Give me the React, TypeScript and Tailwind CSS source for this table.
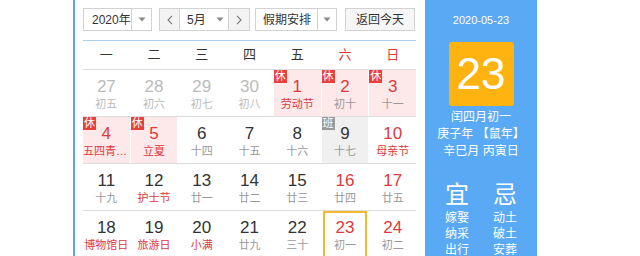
import React from 'react';

type Day = {
  n: number;
  l: string;
  red?: boolean;
  fest?: boolean;
  other?: boolean;
  rest?: boolean;
  work?: boolean;
  today?: boolean;
};

const weeks: Day[][] = [
  [
    { n: 27, l: '初五', other: true },
    { n: 28, l: '初六', other: true },
    { n: 29, l: '初七', other: true },
    { n: 30, l: '初八', other: true },
    { n: 1, l: '劳动节', red: true, fest: true, rest: true },
    { n: 2, l: '初十', red: true, rest: true },
    { n: 3, l: '十一', red: true, rest: true },
  ],
  [
    { n: 4, l: '五四青年节', red: true, fest: true, rest: true },
    { n: 5, l: '立夏', red: true, fest: true, rest: true },
    { n: 6, l: '十四' },
    { n: 7, l: '十五' },
    { n: 8, l: '十六' },
    { n: 9, l: '十七', work: true },
    { n: 10, l: '母亲节', red: true, fest: true },
  ],
  [
    { n: 11, l: '十九' },
    { n: 12, l: '护士节', fest: true },
    { n: 13, l: '廿一' },
    { n: 14, l: '廿二' },
    { n: 15, l: '廿三' },
    { n: 16, l: '廿四', red: true },
    { n: 17, l: '廿五', red: true },
  ],
  [
    { n: 18, l: '博物馆日', fest: true },
    { n: 19, l: '旅游日', fest: true },
    { n: 20, l: '小满', fest: true },
    { n: 21, l: '廿九' },
    { n: 22, l: '三十' },
    { n: 23, l: '初一', red: true, today: true },
    { n: 24, l: '初二', red: true },
  ],
];

function Caret() {
  return (
    <svg width="8" height="5" viewBox="0 0 8 5">
      <path d="M0.5 0.5 L7.5 0.5 L4 4.5 Z" fill="#8a8a8a" />
    </svg>
  );
}

function Chevron({ dir }: { dir: 'l' | 'r' }) {
  return (
    <svg width="6" height="10" viewBox="0 0 6 10">
      <path
        d={dir === 'l' ? 'M5 0.8 L1 5 L5 9.2' : 'M1 0.8 L5 5 L1 9.2'}
        fill="none"
        stroke="#777"
        strokeWidth="1.1"
      />
    </svg>
  );
}

function Cell({ d }: { d: Day }) {
  const bg = d.rest ? 'bg-[#fde9e9]' : d.work ? 'bg-[#f0f0f0]' : '';
  const numColor = d.other ? 'text-[#bbbbbb]' : d.red ? 'text-[#e0383c]' : 'text-[#333333]';
  const lunColor = d.other ? 'text-[#bbbbbb]' : d.fest ? 'text-[#e0383c]' : 'text-[#999999]';
  return (
    <div className={`relative h-[46px] flex flex-col items-center ${bg}`}>
      {d.rest && (
        <div className="absolute top-0 left-0 w-[13px] h-[13px] bg-[#e8413b] text-white text-[11px] leading-[13px] text-center">
          休
        </div>
      )}
      {d.work && (
        <div className="absolute top-0 left-0 w-[13px] h-[13px] bg-[#9a9a9a] text-white text-[11px] leading-[13px] text-center">
          班
        </div>
      )}
      {d.today && <div className="absolute inset-x-px top-0 h-[50px] border-2 border-[#f5b82e]" />}
      <div className={`pt-[7px] text-[17px] leading-[20px] ${numColor}`}>{d.n}</div>
      <div className={`w-full text-center truncate text-[11px] leading-[14px] ${lunColor}`}>{d.l}</div>
    </div>
  );
}

export default function App() {
  return (
    <div
      className="w-[640px] h-[256px] overflow-hidden bg-white flex"
      style={{ fontFamily: '"Liberation Sans", "Noto Sans CJK SC", sans-serif' }}
    >
      <div className="w-[73px] shrink-0" />
      <div className="flex border-l-2 border-[#5ba4ea] pl-2 h-full">
        <div className="w-[333px] shrink-0">
          {/* controls */}
          <div className="flex items-center h-[23px] mt-2 text-[12px] text-[#333]">
            <div className="flex h-full w-[69px] border border-[#d2d2d2] bg-white">
              <div className="flex-1 flex items-center pl-[8px]">2020年</div>
              <div className="w-[20px] border-l border-[#d2d2d2] flex items-center justify-center">
                <Caret />
              </div>
            </div>
            <div className="flex h-full w-[91px] ml-[7px] border border-[#d2d2d2]">
              <div className="w-[20px] bg-[#f3f3f3] border-r border-[#d2d2d2] flex items-center justify-center">
                <Chevron dir="l" />
              </div>
              <div className="flex-1 flex items-center pl-[7px]">5月</div>
              <div className="w-[16px] flex items-center justify-center">
                <Caret />
              </div>
              <div className="w-[21px] bg-[#f3f3f3] border-l border-[#d2d2d2] flex items-center justify-center">
                <Chevron dir="r" />
              </div>
            </div>
            <div className="flex h-full w-[82px] ml-[5px] border border-[#d2d2d2]">
              <div className="flex-1 flex items-center pl-[7px]">假期安排</div>
              <div className="w-[19px] border-l border-[#d2d2d2] flex items-center justify-center">
                <Caret />
              </div>
            </div>
            <div className="h-full w-[70px] ml-[8px] border border-[#d2d2d2] bg-[#f6f6f6] flex items-center justify-center">
              返回今天
            </div>
          </div>
          <div className="mt-[9px] h-px bg-[#a9d0f2]" />
          {/* weekdays */}
          <div className="grid grid-cols-7 gap-x-px h-[29px] border-b border-[#dddddd] text-[13px]">
            {['一', '二', '三', '四', '五', '六', '日'].map((w, i) => (
              <div
                key={w}
                className={`flex items-center justify-center ${i >= 5 ? 'text-[#e0383c]' : 'text-[#333]'}`}
              >
                {w}
              </div>
            ))}
          </div>
          {weeks.map((wk, i) => (
            <div key={i} className="grid grid-cols-7 gap-x-px border-b border-[#dddddd]">
              {wk.map((d) => (
                <Cell key={`${i}-${d.n}`} d={d} />
              ))}
            </div>
          ))}
        </div>
        {/* right panel */}
        <div className="w-[112px] ml-[9px] h-full bg-[#59a9f5] text-white flex flex-col items-center">
          <div className="mt-[13px] text-[11px] leading-[14px]">2020-05-23</div>
          <div className="mt-[15px] w-[65px] h-[64px] rounded-[3px] bg-[#ffb310] text-[44px] leading-[64px] text-center">
            23
          </div>
          <div className="mt-[3px] text-[12px] leading-[17px] text-center">
            <div>闰四月初一</div>
            <div>庚子年 【鼠年】</div>
            <div>辛巳月 丙寅日</div>
          </div>
          <div className="mt-[12px] h-px w-[95px] bg-[#a6d0f8]" />
          <div className="mt-[9px] w-full px-[8px] grid grid-cols-2 text-center">
            <div className="text-[24px] leading-[28px]">宜</div>
            <div className="text-[24px] leading-[28px]">忌</div>
            <div className="mt-px text-[12px] leading-[16px]">
              <div>嫁娶</div>
              <div>纳采</div>
              <div>出行</div>
            </div>
            <div className="mt-px text-[12px] leading-[16px]">
              <div>动土</div>
              <div>破土</div>
              <div>安葬</div>
            </div>
          </div>
        </div>
      </div>
    </div>
  );
}
